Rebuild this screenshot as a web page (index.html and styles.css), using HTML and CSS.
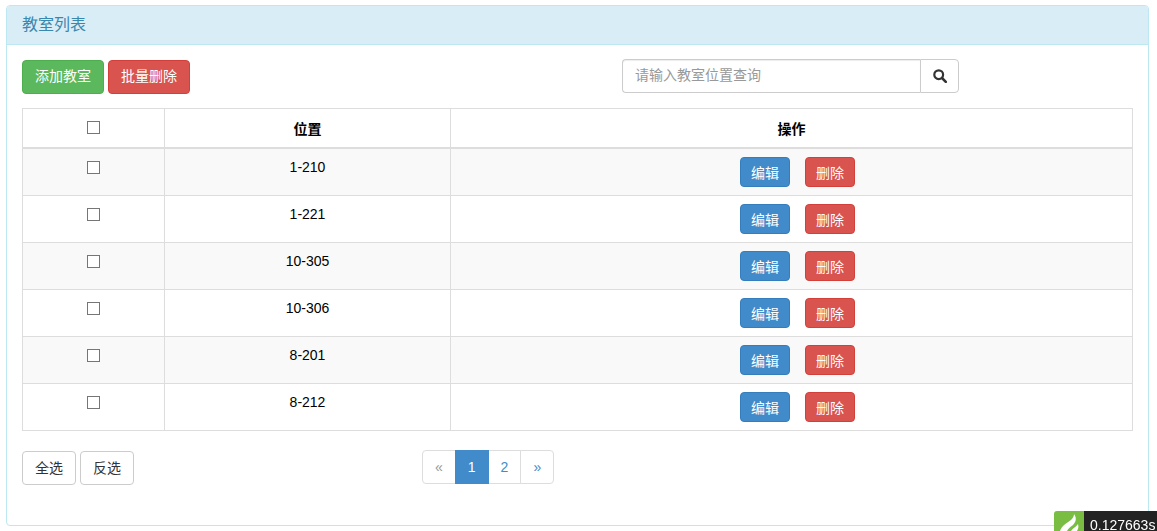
FILE: index.html
```html
<!DOCTYPE html>
<html lang="zh-CN">
<head>
    <meta charset="UTF-8">
    <title>教室列表</title>
    <link rel="stylesheet" href="styles.css">
</head>
<body>
    <div class="panel">
        <div class="panel-heading">教室列表</div>
        <div class="panel-body">
            <div class="toolbar">
                <div class="toolbar-left">
                    <button class="btn btn-success">添加教室</button>
                    <button class="btn btn-danger">批量删除</button>
                </div>
                <div class="search-group">
                    <input class="search-input" type="text" placeholder="请输入教室位置查询">
                    <button class="search-btn" aria-label="搜索">
                        <svg width="14" height="14" viewBox="0 0 14 14"><circle cx="5.7" cy="5.7" r="4.4" fill="none" stroke="#333" stroke-width="2.2"/><path d="M9 9L12.8 12.8" stroke="#333" stroke-width="2.6" stroke-linecap="round"/></svg>
                    </button>
                </div>
            </div>
            <table class="table">
                <thead>
                    <tr>
                        <th class="col-check"><input type="checkbox"></th>
                        <th class="col-pos">位置</th>
                        <th>操作</th>
                    </tr>
                </thead>
                <tbody>
                    <tr>
                        <td><input type="checkbox"></td>
                        <td>1-210</td>
                        <td class="actions"><button class="btn btn-primary">编辑</button><button class="btn btn-danger">删除</button></td>
                    </tr>
                    <tr>
                        <td><input type="checkbox"></td>
                        <td>1-221</td>
                        <td class="actions"><button class="btn btn-primary">编辑</button><button class="btn btn-danger">删除</button></td>
                    </tr>
                    <tr>
                        <td><input type="checkbox"></td>
                        <td>10-305</td>
                        <td class="actions"><button class="btn btn-primary">编辑</button><button class="btn btn-danger">删除</button></td>
                    </tr>
                    <tr>
                        <td><input type="checkbox"></td>
                        <td>10-306</td>
                        <td class="actions"><button class="btn btn-primary">编辑</button><button class="btn btn-danger">删除</button></td>
                    </tr>
                    <tr>
                        <td><input type="checkbox"></td>
                        <td>8-201</td>
                        <td class="actions"><button class="btn btn-primary">编辑</button><button class="btn btn-danger">删除</button></td>
                    </tr>
                    <tr>
                        <td><input type="checkbox"></td>
                        <td>8-212</td>
                        <td class="actions"><button class="btn btn-primary">编辑</button><button class="btn btn-danger">删除</button></td>
                    </tr>
                </tbody>
            </table>
            <div class="footer-row">
                <div class="footer-left">
                    <button class="btn btn-default">全选</button>
                    <button class="btn btn-default">反选</button>
                </div>
                <ul class="pagination">
                    <li class="disabled">«</li>
                    <li class="active">1</li>
                    <li>2</li>
                    <li>»</li>
                </ul>
            </div>
        </div>
    </div>

    <div class="trace">
        <span class="trace-logo">
            <svg width="30" height="20" viewBox="0 0 30 20"><path d="M6 20C8 14 13 12 17 9C19 7 20 5 20 3C23 7 22 11 19 14C16 16 14 18 13 20Z" fill="#fff"/><path d="M17 20C19 17 22 16 24 13C25 16 24 18 23 20Z" fill="#fff"/></svg>
        </span>
        <span class="trace-time">0.127663s</span>
    </div>
</body>
</html>
```

FILE: styles.css
```css
* {
    box-sizing: border-box;
}
html, body {
    height: 100%;
}
body {
    margin: 0;
    padding: 5px 8px 0 6px;
    font-family: "Liberation Sans", "Noto Sans CJK SC", sans-serif;
    font-size: 14px;
    line-height: 20px;
    color: #333;
    background: #fff;
    overflow: hidden;
}
.panel {
    height: 521px;
    border: 1px solid #bce8f1;
    border-radius: 4px;
}
.panel-heading {
    height: 39px;
    padding: 9px 15px;
    font-size: 16px;
    line-height: 20px;
    color: #3a87ad;
    background: #d9edf7;
    border-bottom: 1px solid #bce8f1;
    border-radius: 3px 3px 0 0;
}
.panel-body {
    padding: 14px 15px 0;
}

/* 按钮 */
.btn {
    height: 34px;
    padding: 6px 12px;
    font: inherit;
    line-height: 20px;
    border: 1px solid transparent;
    border-radius: 4px;
    cursor: pointer;
}
.btn-success {
    color: #fff;
    background: #5cb85c;
    border-color: #4cae4c;
}
.btn-danger {
    color: #fff;
    background: #d9534f;
    border-color: #d43f3a;
}
.btn-primary {
    color: #fff;
    background: #428bca;
    border-color: #357ebd;
}
.btn-default {
    color: #333;
    background: #fff;
    border-color: #ccc;
}

.toolbar {
    display: flex;
    align-items: flex-start;
    height: 49px;
}
.toolbar-left {
    display: flex;
    gap: 4px;
    width: 600px;
    padding-top: 1px;
}
.toolbar-left .btn {
    padding: 5px 12px 7px;
}
.search-group {
    display: flex;
    width: 337px;
}
.search-input {
    width: 298px;
    height: 34px;
    padding: 5px 12px 7px;
    font: inherit;
    color: #555;
    border: 1px solid #ccc;
    border-right: none;
    border-radius: 4px 0 0 4px;
    box-shadow: inset 0 1px 1px rgba(0, 0, 0, 0.075);
    outline: none;
}
.search-input::placeholder {
    color: #999;
}
.search-btn {
    display: flex;
    align-items: center;
    justify-content: center;
    width: 39px;
    height: 34px;
    padding: 0;
    background: #fff;
    border: 1px solid #ccc;
    border-radius: 0 4px 4px 0;
}

/* 表格 */
.table {
    width: 1111px;
    border-collapse: collapse;
    table-layout: fixed;
    color: #000;
}
.table th, .table td {
    padding: 8px;
    text-align: center;
    vertical-align: top;
    border: 1px solid #ddd;
}
.table th {
    height: 39px;
    padding-top: 10px;
    padding-bottom: 6px;
    border-bottom-width: 2px;
}
.table th.col-check {
    padding-top: 8px;
}
.table td {
    height: 47px;
}
.table tbody tr:first-child td {
    height: 48px;
}
.table td.actions {
    padding: 8px 8px 0 20px;
}
.table tbody tr:nth-child(odd) {
    background: #f9f9f9;
}
.col-check {
    width: 142px;
}
.col-pos {
    width: 286px;
}
input[type="checkbox"] {
    appearance: none;
    display: inline-block;
    width: 13px;
    height: 13px;
    margin: 4px 0 0;
    vertical-align: top;
    background: #fff;
    border: 1px solid #767676;
}
.actions .btn {
    width: 50px;
    height: 30px;
    padding: 5px 0 3px;
    vertical-align: top;
}
.actions .btn + .btn {
    margin-left: 15px;
}

/* 底部 */
.footer-row {
    display: flex;
    align-items: flex-start;
    margin-top: 19px;
}
.footer-left {
    display: flex;
    gap: 4px;
    width: 400px;
    padding-top: 1px;
}
.pagination {
    display: flex;
    margin: 0;
    padding: 0;
    list-style: none;
}
.pagination li {
    height: 34px;
    margin-left: -1px;
    padding: 6px 12px;
    color: #428bca;
    background: #fff;
    border: 1px solid #ddd;
}
.pagination li:first-child {
    margin-left: 0;
    border-radius: 4px 0 0 4px;
}
.pagination li:last-child {
    border-radius: 0 4px 4px 0;
}
.pagination .disabled {
    color: #999;
}
.pagination .active {
    z-index: 1;
    color: #fff;
    background: #428bca;
    border-color: #428bca;
}

/* 右下角运行时间 */
.trace {
    position: fixed;
    right: 0;
    bottom: 0;
    display: flex;
    height: 20px;
}
.trace-logo {
    display: block;
    width: 30px;
    height: 20px;
    background: #79bd43;
    border-radius: 3px 0 0 0;
}
.trace-logo svg {
    display: block;
}
.trace-time {
    width: 73px;
    padding: 4px 0 0 6px;
    font-size: 14px;
    line-height: 20px;
    color: #fff;
    background: #232323;
    white-space: nowrap;
}
```
